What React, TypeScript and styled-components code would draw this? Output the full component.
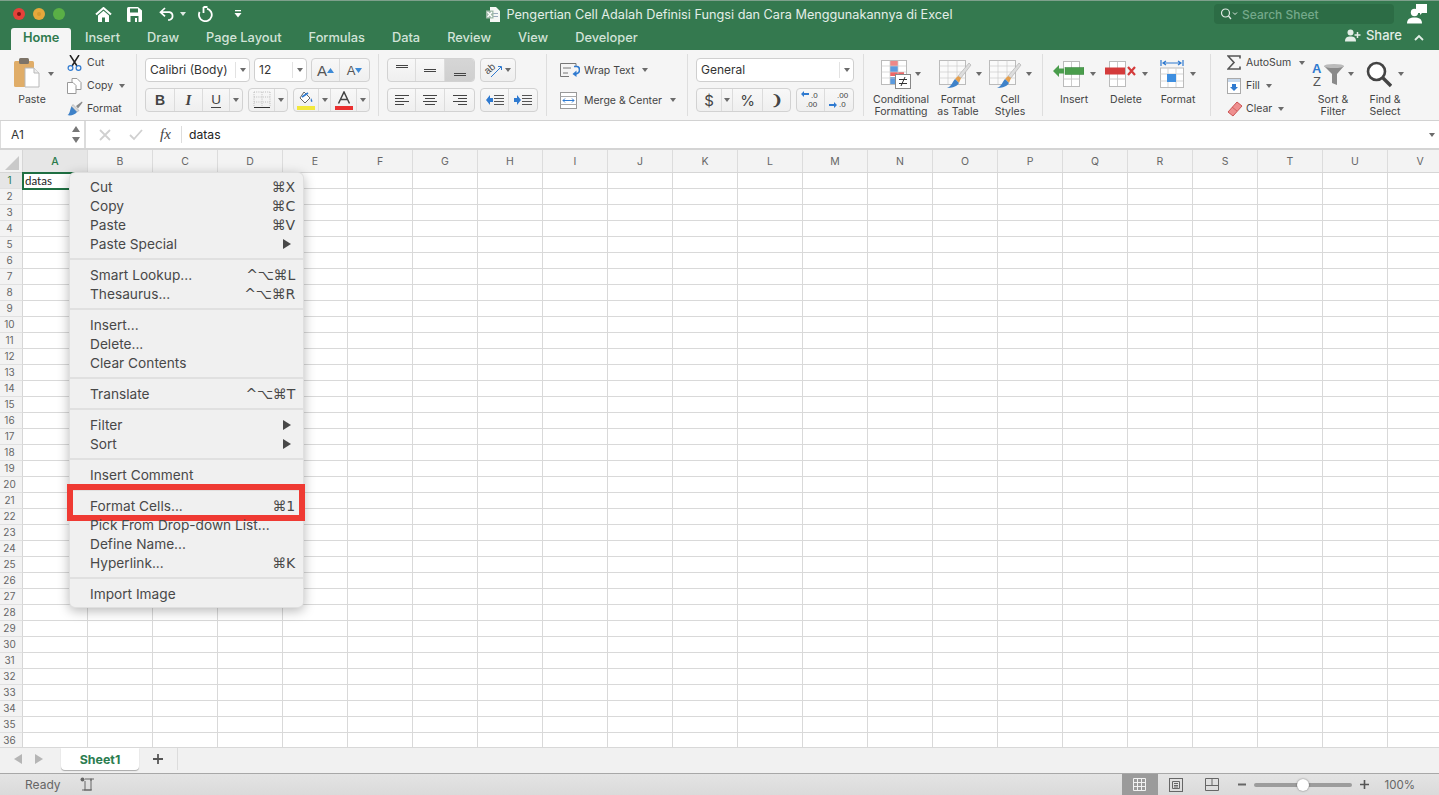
import React from "react";
import styled, { createGlobalStyle } from "styled-components";

const Global = createGlobalStyle`
  html, body { margin: 0; padding: 0; background: #fff; }
  * { box-sizing: border-box; }
  body { font-family: Inter, "Liberation Sans", "DejaVu Sans", sans-serif; }
`;

const Page = styled.div`
  width: 1439px; height: 795px; overflow: hidden; display: flex; flex-direction: column;
`;

/* ---------- Title area ---------- */
const Header = styled.header`
  height: 50px; flex: none; background: #34794f; border-top: 1px solid #7ea08c;
  display: flex; flex-direction: column;
`;
const TitleRow = styled.div`
  height: 26px; display: grid; grid-template-columns: 1fr auto 1fr; align-items: center;
`;
const QuickBar = styled.div`display: flex; align-items: center; padding-left: 13px;`;
const Light = styled.span<{ $c: string; $d: string }>`
  width: 12px; height: 12px; border-radius: 50%; margin-right: 8px; background: ${p => p.$c};
  display: flex; align-items: center; justify-content: center;
  &::after { content: ""; width: 4px; height: 4px; border-radius: 50%; background: ${p => p.$d}; }
`;
const QuickIcon = styled.span<{ $ml: number }>`
  display: flex; margin-left: ${p => p.$ml}px; align-items: center;
`;
const TitleText = styled.div`
  display: flex; align-items: center; gap: 6px; color: #e3eee7; font-size: 12.7px; white-space: nowrap;
`;
const RightBar = styled.div`display: flex; justify-content: flex-end; align-items: center;`;
const SearchBox = styled.div`
  width: 180px; height: 20px; border-radius: 4px; background: #2c6c45; display: flex; align-items: center;
  padding-left: 6px; color: #74a98a; font-size: 12px; font-weight: 500; margin-right: 13px;
`;
const SearchLabel = styled.span`margin-left: 4px;`;
const AccountWrap = styled.span`display: flex; margin-right: 12px;`;
const TabRow = styled.nav`height: 23px; display: flex; align-items: flex-end; padding-left: 11px; position: relative;`;
const Tab = styled.div<{ $active?: boolean }>`
  height: 22px; padding: 0 ${p => (p.$active ? 12 : 13.5)}px 4px; display: flex; align-items: center;
  font-size: 12.8px; font-weight: ${p => (p.$active ? 600 : 500)};
  color: ${p => (p.$active ? "#2f7a4e" : "#d2e3d8")};
  background: ${p => (p.$active ? "#f5f5f5" : "transparent")};
  border-radius: 3px 3px 0 0;
`;
const ShareBar = styled.div`
  margin-left: auto; display: flex; align-items: center; color: #e3eee7; font-size: 13px; font-weight: 500;
  height: 22px; padding: 0 15px 8px 0; gap: 5px;
`;
const ChevronWrap = styled.span`display: flex; margin: 4px 0 0 7px;`;

/* ---------- Ribbon ---------- */
const Ribbon = styled.div`
  height: 71px; flex: none; display: flex; background: #f5f5f5; border-bottom: 1px solid #d2d2d2;
`;
const Section = styled.section<{ $w?: number; $pl?: number }>`
  ${p => (p.$w ? `width:${p.$w}px;flex:none;` : "flex:1;")}
  padding-left: ${p => p.$pl ?? 0}px; display: flex;
`;
const Divider = styled.div`width: 1px; flex: none; margin: 4px 0 4px; background: #dedede;`;
const Stack = styled.div<{ $top: number; $gap: number }>`
  display: flex; flex-direction: column; padding-top: ${p => p.$top}px; gap: ${p => p.$gap}px;
`;
const CtlRow = styled.div<{ $gap?: number }>`display: flex; gap: ${p => p.$gap ?? 5}px; height: 24px; align-items: center;`;
const Select = styled.div<{ $w: number }>`
  width: ${p => p.$w}px; height: 24px; background: #fff; border: 1px solid #cfcfcf; border-radius: 4px;
  display: flex; align-items: center; font-size: 12px; color: #333; padding: 0 0 2px 4px; position: relative;
`;
const SelectArrow = styled.span`
  margin-left: auto; width: 14px; height: 16px; border-left: 1px solid #e2e2e2; display: flex;
  align-items: center; justify-content: center; margin-top: 2px;
`;
const Caret = styled.span<{ $ml?: number }>`
  display: inline-block; flex: none; width: 0; height: 0; margin-left: ${p => p.$ml ?? 0}px;
  border-left: 3px solid transparent; border-right: 3px solid transparent; border-top: 4px solid #6b6b6b;
`;
const LightCaret = styled(Caret)`border-top-color: #dfe9e3;`;
const BtnGroup = styled.div`
  display: flex; height: 24px; border: 1px solid #d2d2d2; border-radius: 4px; overflow: hidden;
  background: linear-gradient(#f8f8f8, #efefef);
`;
const Btn = styled.div<{ $w: number; $on?: boolean }>`
  width: ${p => p.$w}px; height: 100%; display: flex; align-items: center; justify-content: center;
  color: #444; font-size: 13px; border-right: 1px solid #dcdcdc;
  background: ${p => (p.$on ? "linear-gradient(#d6d6d6,#cfcfcf)" : "transparent")};
  &:last-child { border-right: 0; }
`;
const BoldGlyph = styled.span`font-family: "Liberation Sans", sans-serif; font-weight: 700; font-size: 14px; color: #444;`;
const ItalicGlyph = styled.span`font-family: "Liberation Serif", serif; font-style: italic; font-weight: 700; font-size: 15px; color: #444;`;
const UnderGlyph = styled.span`font-family: "Liberation Sans", sans-serif; font-size: 13.5px; color: #444; border-bottom: 1px solid #444; line-height: 14px;`;
const SizeGlyph = styled.span<{ $s: number }>`font-family: "Liberation Sans", sans-serif; font-size: ${p => p.$s}px; color: #555; line-height: 1;`;
const NumGlyph = styled.span`font-size: 15px; color: #444;`;
const SmallRows = styled.div<{ $w: number; $ml?: number }>`
  width: ${p => p.$w}px; margin-left: ${p => p.$ml ?? 0}px; padding-top: 1px; display: flex; flex-direction: column;
`;
const SmallRow = styled.div`
  height: 23px; display: flex; align-items: center; font-size: 10.5px; color: #444; white-space: nowrap;
`;
const IconSlot = styled.span<{ $w: number }>`width: ${p => p.$w}px; flex: none; display: flex;`;
const WrapRow = styled.div`
  height: 22px; display: flex; align-items: center; font-size: 10.5px; color: #444; white-space: nowrap;
`;
const LargeBtn = styled.div<{ $w: number }>`
  width: ${p => p.$w}px; flex: none; display: flex; flex-direction: column; align-items: center;
`;
const LargeIcon = styled.div<{ $gap?: number; $ml?: number }>`
  height: 40px; margin: 4px 0 0 ${p => p.$ml ?? 0}px; display: flex; align-items: center; justify-content: center; gap: ${p => p.$gap ?? 4}px;
`;
const LargeLabel = styled.div`
  font-size: 10.5px; line-height: 12px; color: #444; text-align: center; white-space: nowrap;
`;

/* ---------- Formula bar ---------- */
const FormulaBar = styled.div`
  height: 29px; flex: none; display: flex; background: #fff; border-bottom: 2px solid #d4d4d4;
`;
const NameBox = styled.div`
  width: 86px; display: flex; align-items: center; padding-left: 10px; font-size: 12px; color: #333;
  border: 1px solid #dcdcdc; border-width: 0 2px 0 1px; background: #fff;
  position: relative;
`;
const Steppers = styled.span`margin-left: auto; margin-right: 4px; display: flex;`;
const FxArea = styled.div`display: flex; align-items: center; flex: 1; padding-left: 13px;`;
const CrossGap = styled.span`width: 18px;`;
const FxGlyph = styled.span`
  font-family: "Liberation Serif", serif; font-style: italic; font-size: 15px; color: #444;
  margin-left: 17px; width: 22px; height: 17px; line-height: 17px; border-right: 1px solid #ddd;
`;
const FormulaText = styled.span`margin-left: 7px; font-size: 12.2px; color: #222;`;
const EndCaret = styled.span`margin-left: auto; margin-right: 4px; display: flex;`;

/* ---------- Sheet ---------- */
const Sheet = styled.div`flex: 1; position: relative; overflow: hidden; background: #fff;`;
const ColHeads = styled.div`display: flex; height: 23px; width: max-content; background: #f3f3f3; border-bottom: 1px solid #d6d6d6;`;
const Corner = styled.div`width: 23px; flex: none; border-right: 1px solid #d6d6d6; display: flex; align-items: flex-end; padding: 0 0 2px 5px;`;
const ColHead = styled.div<{ $on?: boolean }>`
  width: 65px; flex: none; border-right: 1px solid #dcdcdc; display: flex; align-items: center; justify-content: center;
  font-size: 10.5px; color: ${p => (p.$on ? "#2a7a4b" : "#666")}; background: ${p => (p.$on ? "#e6e6e6" : "transparent")};
  font-weight: ${p => (p.$on ? 500 : 400)};
`;
const Row = styled.div`display: flex; height: 16px; width: max-content;`;
const RowHead = styled.div<{ $on?: boolean }>`
  width: 23px; flex: none; border-right: 1px solid #d6d6d6; border-bottom: 1px solid #e0e0e0;
  background: ${p => (p.$on ? "#e6e6e6" : "#f3f3f3")};
  color: ${p => (p.$on ? "#2a7a4b" : "#666")}; font-size: 10px; text-align: center; line-height: 15px;
  padding-right: 3px;
`;
const Cell = styled.div<{ $sel?: boolean }>`
  width: 65px; flex: none; border-right: 1px solid #d9d9d9; border-bottom: 1px solid #d9d9d9;
  font-family: Lato, "Liberation Sans", sans-serif; font-size: 11.5px; line-height: 15px; color: #222; padding-left: 2px;
  ${p => p.$sel && "outline: 2px solid #1f6f42; outline-offset: -1px; position: relative; z-index: 1;"}
`;

/* ---------- Context menu ---------- */
const Menu = styled.div`
  position: absolute; left: 69px; top: 22px; width: 235px; padding: 4px 0; z-index: 3;
  background: #f0f0f0; border-radius: 6px; border: 1px solid rgba(0,0,0,.07);
  box-shadow: 0 3px 12px rgba(0,0,0,.28);
`;
const MenuItem = styled.div`
  height: 19px; display: flex; align-items: center; padding: 0 8px 0 20px; position: relative;
  font-size: 13.7px; color: #484848; white-space: nowrap;
`;
const Shortcut = styled.span`
  margin-left: auto; font-family: "DejaVu Sans", sans-serif; font-size: 14px; color: #484848; letter-spacing: -.2px;
`;
const SubArrow = styled.span`
  margin-left: auto; margin-right: 4px; width: 0; height: 0;
  border-top: 5px solid transparent; border-bottom: 5px solid transparent; border-left: 8px solid #484848;
`;
const MenuSep = styled.div`height: 2px; margin: 5px 0; background: #e0e0e0;`;
const Highlight = styled.div`
  position: absolute; left: -3px; right: -2px; top: -12px; bottom: -6px; border: 6.5px solid #ef3a33;
`;

/* ---------- Bottom ---------- */
const TabBar = styled.div`
  height: 26px; flex: none; background: #f1f1f1; border-top: 1px solid #d8d8d8; display: flex; align-items: flex-start;
`;
const NavArrows = styled.div`width: 61px; height: 22px; padding-left: 14px; display: flex; align-items: center; gap: 13px;`;
const NavArrow = styled.span<{ $left?: boolean }>`
  width: 0; height: 0; border-top: 5px solid transparent; border-bottom: 5px solid transparent;
  ${p => (p.$left ? "border-right: 8px solid #b5b5b5;" : "border-left: 8px solid #b5b5b5;")}
`;
const SheetTab = styled.div`
  width: 78px; height: 22px; background: #fff; border-radius: 0 0 4px 4px; box-shadow: 0 1px 1px rgba(0,0,0,.3);
  display: flex; align-items: center; justify-content: center; color: #2c7d50; font-size: 12.4px; font-weight: 700;
`;
const AddTab = styled.div`
  width: 39px; height: 22px; display: flex; align-items: center; justify-content: center; border-right: 1px solid #dcdcdc;
`;
const StatusBar = styled.footer`
  height: 22px; flex: none; background: linear-gradient(#e4e4e4, #dadada); border-top: 1px solid #a8a8a8;
  display: flex; align-items: center; color: #666; font-size: 12px;
`;
const Ready = styled.span`margin-left: 25px;`;
const MacroIcon = styled.span`margin-left: 19px; display: flex;`;
const StatusRight = styled.div`margin-left: auto; display: flex; align-items: center; height: 100%;`;
const ViewBtn = styled.div<{ $on?: boolean }>`
  width: 36px; height: 100%; display: flex; align-items: center; justify-content: center;
  background: ${p => (p.$on ? "#9b9b9b" : "transparent")};
`;
const ZoomSym = styled.span<{ $ml: number }>`display: flex; margin-left: ${p => p.$ml}px;`;
const Slider = styled.div`
  width: 98px; height: 4px; border-radius: 2px; background: #9c9c9c; margin-left: 8px; position: relative;
`;
const Thumb = styled.span`
  position: absolute; left: 43px; top: -4px; width: 12px; height: 12px; border-radius: 50%;
  background: #fff; box-shadow: 0 0 2px rgba(0,0,0,.5);
`;
const ZoomPct = styled.span`margin: 0 24px 0 16px; font-size: 11.5px;`;

/* ---------- Icons ---------- */
const W = "#fff";
const HomeI = () => (
  <svg width="17" height="15" viewBox="0 0 17 15"><path d="M1 7.6 8.5 1 16 7.6" fill="none" stroke={W} strokeWidth="2"/><path d="M3 8.5 8.5 3.8 14 8.5V15H10V10.5H7V15H3Z" fill={W}/></svg>
);
const SaveI = () => (
  <svg width="15" height="15" viewBox="0 0 15 15"><path d="M0 1.5Q0 0 1.5 0H11L15 3.5V13.5Q15 15 13.5 15H1.5Q0 15 0 13.5Z" fill={W}/><rect x="3" y="1.5" width="8" height="4" fill="#34794f"/><rect x="3.5" y="9" width="8" height="6" fill="#34794f"/><rect x="8" y="11" width="2" height="4" fill={W}/></svg>
);
const UndoI = () => (
  <svg width="16" height="14" viewBox="0 0 16 14"><path d="M6 1 1.5 5.2 6 9.4M1.5 5.2H10.5A4 4 0 0 1 10.5 13H9" fill="none" stroke={W} strokeWidth="1.7"/></svg>
);
const RedoI = () => (
  <svg width="16" height="16" viewBox="0 0 16 16"><path d="M6.5 1V7M6.5 1H10.5M10 2.6A6.4 6.4 0 1 1 2.6 6" fill="none" stroke={W} strokeWidth="1.8"/></svg>
);
const CustomI = () => (
  <svg width="8" height="8" viewBox="0 0 8 8"><rect x="1" y="0" width="6" height="1.3" fill={W}/><path d="M0.5 3H7.5L4 7.5Z" fill={W}/></svg>
);
const DocI = () => (
  <svg width="14" height="15" viewBox="0 0 14 15"><path d="M4 0H10L14 4V15H4Z" fill="#f4f7f5"/><rect x="6" y="6" width="6" height="1" fill="#9ab"/><rect x="6" y="9" width="6" height="1" fill="#9ab"/><rect x="0" y="3.5" width="7.5" height="8" fill="#9fb9a9"/><path d="M1.5 5 6 10M6 5 1.5 10" stroke="#fff" strokeWidth="1.2"/></svg>
);
const SearchI = () => (
  <svg width="18" height="12" viewBox="0 0 18 12"><circle cx="5.5" cy="5" r="4" fill="none" stroke="#dfe9e3" strokeWidth="1.2"/><path d="M8.5 8 11 11" stroke="#dfe9e3" strokeWidth="1.3"/><path d="M13 4.5 15 6.5 17 4.5" fill="none" stroke="#dfe9e3"/></svg>
);
const AccountI = () => (
  <svg width="20" height="20" viewBox="0 0 20 20"><path d="M9 0H20V9H15L13 11V9H9Z" fill={W}/><circle cx="7.5" cy="8.5" r="3.7" fill={W}/><path d="M0 19.5C0 15 3 13.5 7.5 13.5S15 15 15 19.5Z" fill={W}/></svg>
);
const ShareI = () => (
  <svg width="16" height="13" viewBox="0 0 16 13"><circle cx="5.5" cy="3.5" r="3" fill="#e3eee7"/><path d="M0 12.5C0 8.5 2 7.5 5.5 7.5S11 8.5 11 12.5Z" fill="#e3eee7"/><path d="M12.5 3V9M9.5 6H15.5" stroke="#e3eee7" strokeWidth="1.5"/></svg>
);
const Chevron = () => (
  <svg width="10" height="7" viewBox="0 0 10 7"><path d="M1 6 5 2 9 6" fill="none" stroke="#e3eee7" strokeWidth="1.8"/></svg>
);
const PasteI = () => (
  <svg width="26" height="32" viewBox="0 0 26 32"><rect x="0" y="3" width="20" height="26" rx="1.5" fill="#e0ad68"/><rect x="5" y="0" width="10" height="6" rx="1.5" fill="#7d7468"/><path d="M11 10H20L25 15V29H11Z" fill="#fff" stroke="#b9b9b9"/><path d="M20 10V15H25" fill="#eee" stroke="#b9b9b9"/></svg>
);
const CutI = () => (
  <svg width="15" height="16" viewBox="0 0 15 16"><path d="M3 0 10 11M12 0 5 11" stroke="#222" strokeWidth="1.5"/><circle cx="3.5" cy="13" r="2.4" fill="none" stroke="#2f7ad0" strokeWidth="1.2"/><circle cx="11.5" cy="13" r="2.4" fill="none" stroke="#2f7ad0" strokeWidth="1.2"/></svg>
);
const CopyI = () => (
  <svg width="15" height="16" viewBox="0 0 15 16"><path d="M5 .5H10L14 4.5V11.5H5Z" fill="#fff" stroke="#999"/><path d="M.5 4.5H6L9 7.5V15.5H.5Z" fill="#fff" stroke="#999"/></svg>
);
const BrushI = () => (
  <svg width="16" height="15" viewBox="0 0 16 15"><path d="M9 5 15 .5 15.5 1.5 11 7.5Z" fill="#8a8a8a"/><path d="M6 3.5 12 9.5 10 11 4.5 5.5Z" fill="#d8d8d8" stroke="#999" strokeWidth=".5"/><path d="M4.5 5.5 10 11C8 14 3 15 .5 14 3 13 3 8 4.5 5.5Z" fill="#3f82c8"/></svg>
);
const BorderI = () => (
  <svg width="18" height="18" viewBox="0 0 18 18"><path d="M1 1H17M1 6H17M1 11H17M1 1V15M9 1V15M17 1V15" stroke="#bdbdbd" strokeDasharray="1 1.2"/><path d="M1 16.5H17" stroke="#333" strokeWidth="1.2"/></svg>
);
const FillI = () => (
  <svg width="18" height="19" viewBox="0 0 18 19"><path d="M7 1 13 7 8 12 3 7Z" fill="#fff" stroke="#666"/><path d="M5 6 11 2" stroke="#2f7ad0" strokeWidth="1.6"/><path d="M14 7Q16 10 15 11 13 11 14 7Z" fill="#2f7ad0"/><rect x="0" y="15" width="18" height="4" fill="#f2e83b"/></svg>
);
const ColorA = () => (
  <svg width="18" height="19" viewBox="0 0 18 19"><path d="M3.5 12.5 9 1 14.5 12.5M5.5 8.5H12.5" fill="none" stroke="#444" strokeWidth="1.5"/><rect x="0" y="15" width="18" height="4" fill="#ea2f2f"/></svg>
);
const Up = ({ c = "#3d8ad6" }: { c?: string }) => <svg width="7" height="5" viewBox="0 0 7 5"><path d="M0 5 3.5 0 7 5Z" fill={c}/></svg>;
const Down = ({ c = "#3d8ad6" }: { c?: string }) => <svg width="7" height="5" viewBox="0 0 7 5"><path d="M0 0H7L3.5 5Z" fill={c}/></svg>;
const Lines = ({ rows }: { rows: [number, number, number][] }) => (
  <svg width="16" height="14" viewBox="0 0 16 14">
    {rows.map(([x, y, w], i) => <rect key={i} x={x} y={y} width={w} height="1" fill="#444"/>)}
  </svg>
);
const OrientI = () => (
  <svg width="18" height="16" viewBox="0 0 18 16" overflow="visible"><text x="0" y="10" fontSize="10" fontFamily="Liberation Sans" fill="#444" transform="rotate(-40 5 8)">ab</text><path d="M6 15 16 5M13 4.5H16.5V8" fill="none" stroke="#2f7ad0"/></svg>
);
const IndentI = ({ right }: { right?: boolean }) => (
  <svg width="18" height="12" viewBox="0 0 18 12"><path d="M8 1.5H18M8 4.5H18M8 7.5H18M8 10.5H18" stroke="#555"/>{right ? <path d="M0 4H3V1L7 6 3 11V8H0Z" fill="#2f7ad0"/> : <path d="M7 4H4V1L0 6 4 11V8H7Z" fill="#2f7ad0"/>}</svg>
);
const WrapI = () => (
  <svg width="20" height="14" viewBox="0 0 20 14"><path d="M.5.5H16V3M.5.5V13.5H9M3 5H11M3 10H8" fill="none" stroke="#777"/><path d="M14 3.5H17Q19.5 3.5 19.5 7T15 11" fill="none" stroke="#2f7ad0" strokeWidth="1.6"/><path d="M16.5 7.5 12.5 11 16.5 14Z" fill="#2f7ad0"/></svg>
);
const MergeI = () => (
  <svg width="17" height="17" viewBox="0 0 17 17"><rect x=".5" y=".5" width="16" height="16" fill="#fff" stroke="#999"/><path d="M.5 4.5H16.5M.5 12.5H16.5" stroke="#aaa"/><path d="M3 8.5H14M5 6.5 3 8.5 5 10.5M12 6.5 14 8.5 12 10.5" fill="none" stroke="#2f7ad0"/></svg>
);
const DecI = ({ more }: { more?: boolean }) => (
  <svg width="20" height="18" viewBox="0 0 20 18" overflow="visible">
    <path d={more ? "M8 2H3V0L0 3 3 6V4H8Z" : "M0 13H5V11L8 14 5 17V15H0Z"} fill="#2f7ad0"/>
    <text x={10} y={more ? 7 : 16} fontSize="8" fontFamily="Liberation Sans" fill="#444">.0</text>
    <text x={more ? 5 : 8} y={more ? 16 : 7} fontSize="8" fontFamily="Liberation Sans" fill="#444">.00</text>
  </svg>
);
const CondI = () => (
  <svg width="30" height="29" viewBox="0 0 30 29">
    <rect x=".5" y=".5" width="25" height="24" fill="#fff" stroke="#bbb"/>
    <rect x="9" y="1" width="8" height="5" fill="#e88"/><rect x="9" y="6" width="8" height="6" fill="#5b9bdf"/><rect x="9" y="12" width="14" height="4" fill="#e66"/><rect x="9" y="17" width="7" height="7" fill="#5b9bdf"/>
    <path d="M9 .5V24M17 .5V24M.5 6H25M.5 12H25M.5 18H25" stroke="#ccc" strokeWidth=".7"/>
    <rect x="14.5" y="14.5" width="15" height="14" fill="#fff" stroke="#888"/>
    <path d="M18 19.5H26M18 23.5H26M24 17 20 26" stroke="#333"/>
  </svg>
);
const TableI = () => (
  <svg width="33" height="29" viewBox="0 0 33 29">
    <rect x=".5" y=".5" width="26" height="24" fill="#fafafa" stroke="#bbb"/>
    <path d="M9 .5V24M18 .5V24M.5 6H26M.5 12H26M.5 18H26" stroke="#ccc" strokeWidth=".7"/>
    <path d="M32 5 22 18 19 16 30 3Z" fill="#ddd" stroke="#aaa" strokeWidth=".6"/>
    <path d="M22 18 19 16 16 19 20 23Z" fill="#e5a04f"/><path d="M16 19 20 23C18 27 12 28 8 28 13 26 13 22 16 19Z" fill="#3f82c8"/>
  </svg>
);
const InsertI = () => (
  <svg width="31" height="26" viewBox="0 0 31 26"><rect x="10.5" y=".5" width="16" height="25" fill="#fff" stroke="#bbb"/><path d="M18.5 1V25M10.5 18H26.5" stroke="#ccc"/><rect x="12" y="6.5" width="19" height="7" fill="#4a9d4c" stroke="#35803a" strokeWidth=".5"/><path d="M0 10 6 4V7.5H11V12.5H6V16Z" fill="#4a9d4c"/></svg>
);
const DeleteI = () => (
  <svg width="31" height="26" viewBox="0 0 31 26"><rect x="4.5" y=".5" width="16" height="25" fill="#fff" stroke="#bbb"/><path d="M12.5 1V25M4.5 18H20.5" stroke="#ccc"/><rect x="0" y="6.5" width="20" height="7" fill="#d43b3b"/><path d="M23 6 30 14M30 6 23 14" stroke="#d43b3b" strokeWidth="2.2"/></svg>
);
const FormatI = () => (
  <svg width="24" height="28" viewBox="0 0 24 28" overflow="visible"><path d="M1 0V6M23 0V6M3 3H21M6 1 3 3 6 5M18 1 21 3 18 5" fill="none" stroke="#2f7ad0" strokeWidth="1.2"/><rect x=".5" y="8" width="23" height="19.5" fill="#fff" stroke="#bbb"/><path d="M8 8V27M16 8V27M.5 14H23M.5 21H23" stroke="#d5d5d5"/><rect x="7" y="14" width="9" height="8" fill="#3f8fe0"/></svg>
);
const SumI = () => (
  <svg width="14" height="15" viewBox="0 0 14 15"><path d="M13 3.5V1H1L7 7.5 1 14H13V11.5" fill="none" stroke="#555" strokeWidth="1.6"/></svg>
);
const FillDownI = () => (
  <svg width="14" height="16" viewBox="0 0 14 16"><rect x=".5" y=".5" width="13" height="15" fill="#fff" stroke="#aaa"/><rect x="1" y="1" width="12" height="3" fill="#c7d8ec"/><path d="M5 6H9V9H11L7 13 3 9H5Z" fill="#2f7ad0"/></svg>
);
const ClearI = () => (
  <svg width="16" height="16" viewBox="0 0 16 16"><path d="M10 1 15 5 6 15 1 11Z" fill="#ee8f8f" stroke="#c55"/><path d="M5 6 10 10" stroke="#c55" strokeWidth=".8"/></svg>
);
const SortI = () => (
  <svg width="32" height="26" viewBox="0 0 32 26" overflow="visible"><text x="0" y="12" fontSize="13" fontWeight="700" fontFamily="Liberation Sans" fill="#2f7ad0">A</text><text x="1" y="25" fontSize="13" fontFamily="Liberation Sans" fill="#555">Z</text><path d="M12 5H32L25 13V24L20 22V13Z" fill="#8a8a8a"/><ellipse cx="22" cy="5" rx="10" ry="2" fill="#bbb"/></svg>
);
const FindI = () => (
  <svg width="26" height="27" viewBox="0 0 26 27"><circle cx="10.5" cy="10.5" r="8.5" fill="#fff" stroke="#444" strokeWidth="2.6"/><path d="M17 17 25 25" stroke="#444" strokeWidth="3.4"/></svg>
);
const Cross = () => <svg width="12" height="12" viewBox="0 0 12 12"><path d="M1 1 11 11M11 1 1 11" stroke="#d0d0d0" strokeWidth="1.8"/></svg>;
const Check = () => <svg width="14" height="12" viewBox="0 0 14 12"><path d="M1 6 5 10 13 1" fill="none" stroke="#d0d0d0" strokeWidth="1.8"/></svg>;
const StepI = () => <svg width="8" height="17" viewBox="0 0 8 17"><path d="M4 0 8 6H0ZM0 11H8L4 17Z" fill="#777"/></svg>;
const CornerI = () => <svg width="14" height="14" viewBox="0 0 14 14"><path d="M14 0V14H0Z" fill="#c9c9c9"/></svg>;
const Plus = ({ s = 9, c = "#555" }: { s?: number; c?: string }) => <svg width={s} height={s} viewBox="0 0 9 9"><path d="M4.5 0V9M0 4.5H9" stroke={c} strokeWidth="1.6"/></svg>;
const Minus = () => <svg width="8" height="3" viewBox="0 0 8 3"><path d="M0 1.5H8" stroke="#666" strokeWidth="2"/></svg>;
const MacroI = () => <svg width="15" height="15" viewBox="0 0 15 15"><circle cx="2.5" cy="2.5" r="2" fill="#666"/><path d="M5 2H14M11 2V1.5M11 2V4M11 2V13M4 13H11M5 13V4M2 13H12" fill="none" stroke="#666"/></svg>;
const GridV = () => <svg width="13" height="13" viewBox="0 0 13 13"><path d="M.5.5H12.5V12.5H.5ZM4.5.5V12.5M8.5.5V12.5M.5 4.5H12.5M.5 8.5H12.5" fill="none" stroke="#f2f2f2"/></svg>;
const PageV = () => <svg width="14" height="14" viewBox="0 0 14 14"><rect x=".5" y=".5" width="13" height="13" fill="none" stroke="#666"/><path d="M3.5 3.5H10.5V10.5H3.5ZM5 5.5H9M5 7.5H9M5 9H9" fill="none" stroke="#666"/></svg>;
const BreakV = () => <svg width="14" height="13" viewBox="0 0 14 13"><path d="M.5.5H13.5V12.5H.5ZM.5 7.5H13.5M7 .5V7.5" fill="none" stroke="#666"/></svg>;

/* ---------- Data ---------- */
const columns = "ABCDEFGHIJKLMNOPQRSTUV".split("");
const rows = Array.from({ length: 36 }, (_, i) => i + 1);
const tabs = ["Insert", "Draw", "Page Layout", "Formulas", "Data", "Review", "View", "Developer"];

type Entry = { label: string; hint?: string; sub?: boolean; mark?: boolean } | "sep";
const menu: Entry[] = [
  { label: "Cut", hint: "⌘X" }, { label: "Copy", hint: "⌘C" }, { label: "Paste", hint: "⌘V" },
  { label: "Paste Special", sub: true }, "sep",
  { label: "Smart Lookup...", hint: "^⌥⌘L" }, { label: "Thesaurus...", hint: "^⌥⌘R" }, "sep",
  { label: "Insert..." }, { label: "Delete..." }, { label: "Clear Contents" }, "sep",
  { label: "Translate", hint: "^⌥⌘T" }, "sep",
  { label: "Filter", sub: true }, { label: "Sort", sub: true }, "sep",
  { label: "Insert Comment" }, "sep",
  { label: "Format Cells...", hint: "⌘1", mark: true }, { label: "Pick From Drop-down List..." },
  { label: "Define Name..." }, { label: "Hyperlink...", hint: "⌘K" }, "sep",
  { label: "Import Image" },
];

const Arrow = () => <SelectArrow><Caret /></SelectArrow>;

export default function App() {
  return (
    <Page>
      <Global />
      <Header>
        <TitleRow>
          <QuickBar>
            <Light $c="#e5413a" $d="#7a1512" />
            <Light $c="#e6a83c" $d="#d59a30" />
            <Light $c="#5aaf46" $d="#5aaf46" />
            <QuickIcon $ml={22}><HomeI /></QuickIcon>
            <QuickIcon $ml={15}><SaveI /></QuickIcon>
            <QuickIcon $ml={17}><UndoI /></QuickIcon>
            <QuickIcon $ml={5}><LightCaret /></QuickIcon>
            <QuickIcon $ml={11}><RedoI /></QuickIcon>
            <QuickIcon $ml={21}><CustomI /></QuickIcon>
          </QuickBar>
          <TitleText><DocI />Pengertian Cell Adalah Definisi Fungsi dan Cara Menggunakannya di Excel</TitleText>
          <RightBar>
            <SearchBox><SearchI /><SearchLabel>Search Sheet</SearchLabel></SearchBox>
            <AccountWrap><AccountI /></AccountWrap>
          </RightBar>
        </TitleRow>
        <TabRow>
          <Tab $active>Home</Tab>
          {tabs.map(t => <Tab key={t}>{t}</Tab>)}
          <ShareBar><ShareI />Share<ChevronWrap><Chevron /></ChevronWrap></ShareBar>
        </TabRow>
      </Header>

      <Ribbon>
        <Section $w={136}>
          <LargeBtn $w={64}>
            <LargeIcon $gap={8} $ml={4}><PasteI /><Caret /></LargeIcon>
            <LargeLabel>Paste</LargeLabel>
          </LargeBtn>
          <SmallRows $w={70} $ml={3}>
            <SmallRow><IconSlot $w={20}><CutI /></IconSlot>Cut</SmallRow>
            <SmallRow><IconSlot $w={20}><CopyI /></IconSlot>Copy<Caret $ml={6} /></SmallRow>
            <SmallRow><IconSlot $w={20}><BrushI /></IconSlot>Format</SmallRow>
          </SmallRows>
        </Section>
        <Divider />
        <Section $w={241} $pl={8}>
          <Stack $top={8} $gap={6}>
            <CtlRow $gap={4}>
              <Select $w={105}>Calibri (Body)<Arrow /></Select>
              <Select $w={53}>12<Arrow /></Select>
              <BtnGroup>
                <Btn $w={28}><SizeGlyph $s={15}>A</SizeGlyph><Up /></Btn>
                <Btn $w={29}><SizeGlyph $s={13}>A</SizeGlyph><Down /></Btn>
              </BtnGroup>
            </CtlRow>
            <CtlRow>
              <BtnGroup>
                <Btn $w={29}><BoldGlyph>B</BoldGlyph></Btn>
                <Btn $w={28}><ItalicGlyph>I</ItalicGlyph></Btn>
                <Btn $w={27}><UnderGlyph>U</UnderGlyph></Btn>
                <Btn $w={12}><Caret /></Btn>
              </BtnGroup>
              <BtnGroup>
                <Btn $w={26}><BorderI /></Btn>
                <Btn $w={12}><Caret /></Btn>
              </BtnGroup>
              <BtnGroup>
                <Btn $w={25}><FillI /></Btn>
                <Btn $w={12}><Caret /></Btn>
                <Btn $w={26}><ColorA /></Btn>
                <Btn $w={12}><Caret /></Btn>
              </BtnGroup>
            </CtlRow>
          </Stack>
        </Section>
        <Divider />
        <Section $w={167} $pl={8}>
          <Stack $top={8} $gap={6}>
            <CtlRow>
              <BtnGroup>
                <Btn $w={28}><Lines rows={[[2, 2, 12], [2, 4, 12]]} /></Btn>
                <Btn $w={29}><Lines rows={[[2, 6, 12], [2, 8, 12]]} /></Btn>
                <Btn $w={29} $on><Lines rows={[[2, 10, 12], [2, 12, 12]]} /></Btn>
              </BtnGroup>
              <BtnGroup>
                <Btn $w={34}><OrientI /><Caret $ml={2} /></Btn>
              </BtnGroup>
            </CtlRow>
            <CtlRow>
              <BtnGroup>
                <Btn $w={28}><Lines rows={[[1, 2, 14], [1, 5, 9], [1, 8, 14], [1, 11, 9]]} /></Btn>
                <Btn $w={29}><Lines rows={[[1, 2, 14], [3, 5, 10], [1, 8, 14], [3, 11, 10]]} /></Btn>
                <Btn $w={29}><Lines rows={[[1, 2, 14], [6, 5, 9], [1, 8, 14], [6, 11, 9]]} /></Btn>
              </BtnGroup>
              <BtnGroup>
                <Btn $w={28}><IndentI /></Btn>
                <Btn $w={28}><IndentI right /></Btn>
              </BtnGroup>
            </CtlRow>
          </Stack>
        </Section>
        <Divider />
        <Section $w={140} $pl={13}>
          <Stack $top={9} $gap={8}>
            <WrapRow><IconSlot $w={24}><WrapI /></IconSlot>Wrap Text<Caret $ml={8} /></WrapRow>
            <WrapRow><IconSlot $w={24}><MergeI /></IconSlot>Merge &amp; Center<Caret $ml={8} /></WrapRow>
          </Stack>
        </Section>
        <Divider />
        <Section $w={175} $pl={8}>
          <Stack $top={8} $gap={6}>
            <CtlRow><Select $w={158}>General<Arrow /></Select></CtlRow>
            <CtlRow>
              <BtnGroup>
                <Btn $w={25}><NumGlyph>$</NumGlyph></Btn>
                <Btn $w={11}><Caret /></Btn>
                <Btn $w={30}><NumGlyph>%</NumGlyph></Btn>
                <Btn $w={27}><BoldGlyph>❩</BoldGlyph></Btn>
              </BtnGroup>
              <BtnGroup>
                <Btn $w={28}><DecI more /></Btn>
                <Btn $w={28}><DecI /></Btn>
              </BtnGroup>
            </CtlRow>
          </Stack>
        </Section>
        <Divider />
        <Section $w={178} $pl={6}>
          <LargeBtn $w={62}><LargeIcon><CondI /><Caret /></LargeIcon><LargeLabel>Conditional<br />Formatting</LargeLabel></LargeBtn>
          <LargeBtn $w={52}><LargeIcon $ml={4}><TableI /><Caret /></LargeIcon><LargeLabel>Format<br />as Table</LargeLabel></LargeBtn>
          <LargeBtn $w={52}><LargeIcon><TableI /><Caret /></LargeIcon><LargeLabel>Cell<br />Styles</LargeLabel></LargeBtn>
        </Section>
        <Divider />
        <Section $w={167} $pl={5}>
          <LargeBtn $w={52}><LargeIcon $gap={6}><InsertI /><Caret /></LargeIcon><LargeLabel>Insert</LargeLabel></LargeBtn>
          <LargeBtn $w={52}><LargeIcon $gap={6}><DeleteI /><Caret /></LargeIcon><LargeLabel>Delete</LargeLabel></LargeBtn>
          <LargeBtn $w={52}><LargeIcon $gap={6}><FormatI /><Caret /></LargeIcon><LargeLabel>Format</LargeLabel></LargeBtn>
        </Section>
        <Divider />
        <Section $pl={16}>
          <SmallRows $w={80}>
            <SmallRow><IconSlot $w={19}><SumI /></IconSlot>AutoSum<Caret $ml={8} /></SmallRow>
            <SmallRow><IconSlot $w={19}><FillDownI /></IconSlot>Fill<Caret $ml={6} /></SmallRow>
            <SmallRow><IconSlot $w={19}><ClearI /></IconSlot>Clear<Caret $ml={6} /></SmallRow>
          </SmallRows>
          <LargeBtn $w={52}><LargeIcon><SortI /><Caret /></LargeIcon><LargeLabel>Sort &amp;<br />Filter</LargeLabel></LargeBtn>
          <LargeBtn $w={52}><LargeIcon $gap={6}><FindI /><Caret /></LargeIcon><LargeLabel>Find &amp;<br />Select</LargeLabel></LargeBtn>
        </Section>
      </Ribbon>

      <FormulaBar>
        <NameBox>A1<Steppers><StepI /></Steppers></NameBox>
        <FxArea>
          <Cross />
          <CrossGap />
          <Check />
          <FxGlyph>fx</FxGlyph>
          <FormulaText>datas</FormulaText>
          <EndCaret><Caret /></EndCaret>
        </FxArea>
      </FormulaBar>

      <Sheet>
        <ColHeads>
          <Corner><CornerI /></Corner>
          {columns.map((c, i) => <ColHead key={c} $on={i === 0}>{c}</ColHead>)}
        </ColHeads>
        {rows.map(r => (
          <Row key={r}>
            <RowHead $on={r === 1}>{r}</RowHead>
            {columns.map((c, i) => (
              <Cell key={c} $sel={r === 1 && i === 0}>{r === 1 && i === 0 ? "datas" : null}</Cell>
            ))}
          </Row>
        ))}
        <Menu>
          {menu.map((m, i) =>
            m === "sep" ? <MenuSep key={i} /> : (
              <MenuItem key={i}>
                {m.label}
                {m.hint && <Shortcut>{m.hint}</Shortcut>}
                {m.sub && <SubArrow />}
                {m.mark && <Highlight />}
              </MenuItem>
            )
          )}
        </Menu>
      </Sheet>

      <TabBar>
        <NavArrows><NavArrow $left /><NavArrow /></NavArrows>
        <SheetTab>Sheet1</SheetTab>
        <AddTab><Plus s={10} /></AddTab>
      </TabBar>
      <StatusBar>
        <Ready>Ready</Ready>
        <MacroIcon><MacroI /></MacroIcon>
        <StatusRight>
          <ViewBtn $on><GridV /></ViewBtn>
          <ViewBtn><PageV /></ViewBtn>
          <ViewBtn><BreakV /></ViewBtn>
          <ZoomSym $ml={8}><Minus /></ZoomSym>
          <Slider><Thumb /></Slider>
          <ZoomSym $ml={8}><Plus /></ZoomSym>
          <ZoomPct>100%</ZoomPct>
        </StatusRight>
      </StatusBar>
    </Page>
  );
}
